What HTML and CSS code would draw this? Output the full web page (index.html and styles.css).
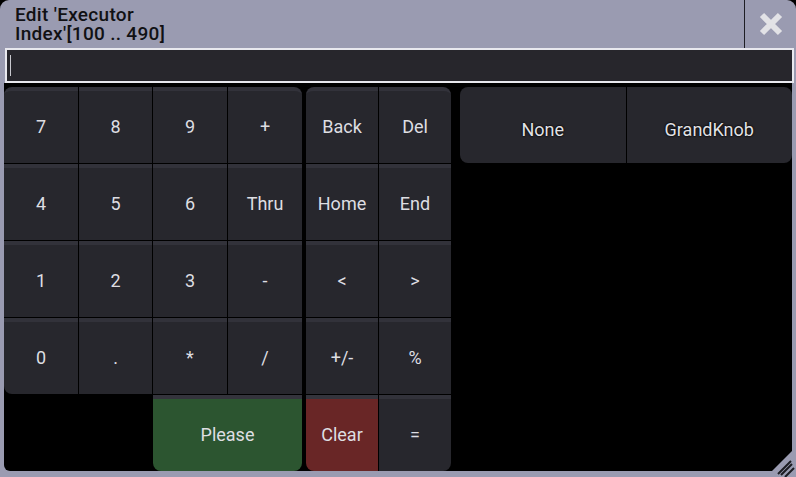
FILE: index.html
```html
<!DOCTYPE html>
<html lang="en">

<head>
    <meta charset="UTF-8">
    <title>Edit Executor Index</title>
    <link rel="stylesheet" href="styles.css">
</head>

<body>
    <div class="window">
        <div class="titleBar">
            <div class="titleText">Edit 'Executor<br>Index'[100 .. 490]</div>
            <div class="closeButton">
                <svg width="24" height="24" viewBox="0 0 24 24">
                    <path d="M3 3 L21 21 M21 3 L3 21" stroke="#e2e2e6" stroke-width="6" />
                </svg>
            </div>
        </div>
        <div class="inputField"><span class="cursor"></span></div>
        <div class="content">
            <div class="keypad">
                <div class="key tl">7</div>
                <div class="key">8</div>
                <div class="key">9</div>
                <div class="key tr">+</div>
                <div class="spacer"></div>
                <div class="key tl">Back</div>
                <div class="key tr">Del</div>

                <div class="key">4</div>
                <div class="key">5</div>
                <div class="key">6</div>
                <div class="key">Thru</div>
                <div class="spacer"></div>
                <div class="key">Home</div>
                <div class="key">End</div>

                <div class="key">1</div>
                <div class="key">2</div>
                <div class="key">3</div>
                <div class="key">-</div>
                <div class="spacer"></div>
                <div class="key">&lt;</div>
                <div class="key">&gt;</div>

                <div class="key bl">0</div>
                <div class="key">.</div>
                <div class="key">*</div>
                <div class="key">/</div>
                <div class="spacer"></div>
                <div class="key">+/-</div>
                <div class="key">%</div>

                <div class="blank"></div>
                <div class="key please">Please</div>
                <div class="spacer"></div>
                <div class="key clear">Clear</div>
                <div class="key br">=</div>
            </div>
            <div class="functions">
                <div class="funcKey">None</div>
                <div class="funcKey">GrandKnob</div>
            </div>
        </div>
        <div class="grip">
            <svg width="30" height="31" viewBox="0 0 30 31">
                <path d="M0 31 L28 3 L28 31 Z" fill="#9a9bb1" />
                <path d="M19 31 L28 22 M15 29 L26 18 M12 28 L25 15" stroke="#1c1c22" stroke-width="2" />
            </svg>
        </div>
    </div>
</body>

</html>
```

FILE: styles.css
```css
html {
    margin: 0;
    background-color: black;
}

body {
    margin: 0;
    font-family: Roboto, "Liberation Sans", sans-serif;
}

.window {
    position: relative;
    width: 796px;
    height: 477px;
    background-color: rgb(154, 155, 177);
    border-radius: 9px 9px 0 0;
    display: flex;
    flex-direction: column;
    overflow: hidden;
}

.titleBar {
    height: 48px;
    display: flex;
    flex-direction: row;
}

.titleText {
    flex: 1;
    padding: 5px 0 0 15px;
    font-size: 19px;
    font-weight: 500;
    letter-spacing: 0.3px;
    line-height: 19px;
    color: rgb(17, 17, 20);
}

.closeButton {
    width: 50px;
    border-left: 1px solid rgb(30, 30, 36);
    display: flex;
    justify-content: center;
    align-items: center;
    padding-left: 1px;
}

.inputField {
    height: 31px;
    margin: 0 2px 0 5px;
    border: 2px solid rgb(232, 232, 238);
    background-color: rgb(39, 38, 44);
    display: flex;
    align-items: center;
}

.cursor {
    width: 1px;
    height: 21px;
    margin-left: 3px;
    background-color: rgb(200, 200, 206);
}

.content {
    flex: 1;
    margin: 0 4px 6px 4px;
    background-color: black;
    border-radius: 0 0 6px 6px;
    display: flex;
    flex-direction: row;
    align-items: flex-start;
    padding-top: 4px;
}

.keypad {
    display: grid;
    grid-template-columns: 74px 73px 74px 74px 2px 72px 72px;
    grid-template-rows: repeat(5, 76px);
    gap: 1px;
}

.key {
    background-color: rgb(39, 39, 45);
    border-top: 4px solid rgb(50, 50, 58);
    color: rgb(222, 222, 226);
    font-size: 18px;
    display: flex;
    justify-content: center;
    align-items: center;
    padding-bottom: 2px;
}

.tl {
    border-top-left-radius: 8px;
}

.tr {
    border-top-right-radius: 8px;
}

.bl {
    border-bottom-left-radius: 8px;
}

.br {
    border-bottom-right-radius: 8px;
}

.blank {
    grid-column: span 2;
}

.please {
    grid-column: span 2;
    background-color: rgb(44, 85, 48);
    border-top-color: rgb(52, 52, 60);
    border-radius: 0 0 8px 8px;
}

.clear {
    background-color: rgb(105, 38, 38);
    border-top-color: rgb(52, 52, 60);
    border-bottom-left-radius: 8px;
}

.functions {
    flex: 1;
    margin-left: 9px;
    height: 76px;
    display: flex;
    flex-direction: row;
    gap: 1px;
}

.funcKey {
    flex: 1;
    background-color: rgb(39, 39, 45);
    color: rgb(226, 226, 230);
    font-size: 18px;
    display: flex;
    justify-content: center;
    align-items: center;
    padding-top: 8px;
    text-shadow: 0 0 2px black, 0 0 2px black;
}

.funcKey:first-child {
    border-radius: 8px 0 0 8px;
}

.funcKey:last-child {
    border-radius: 0 8px 8px 0;
}

.grip {
    position: absolute;
    right: 0;
    bottom: 0;
    width: 30px;
    height: 31px;
}
```
